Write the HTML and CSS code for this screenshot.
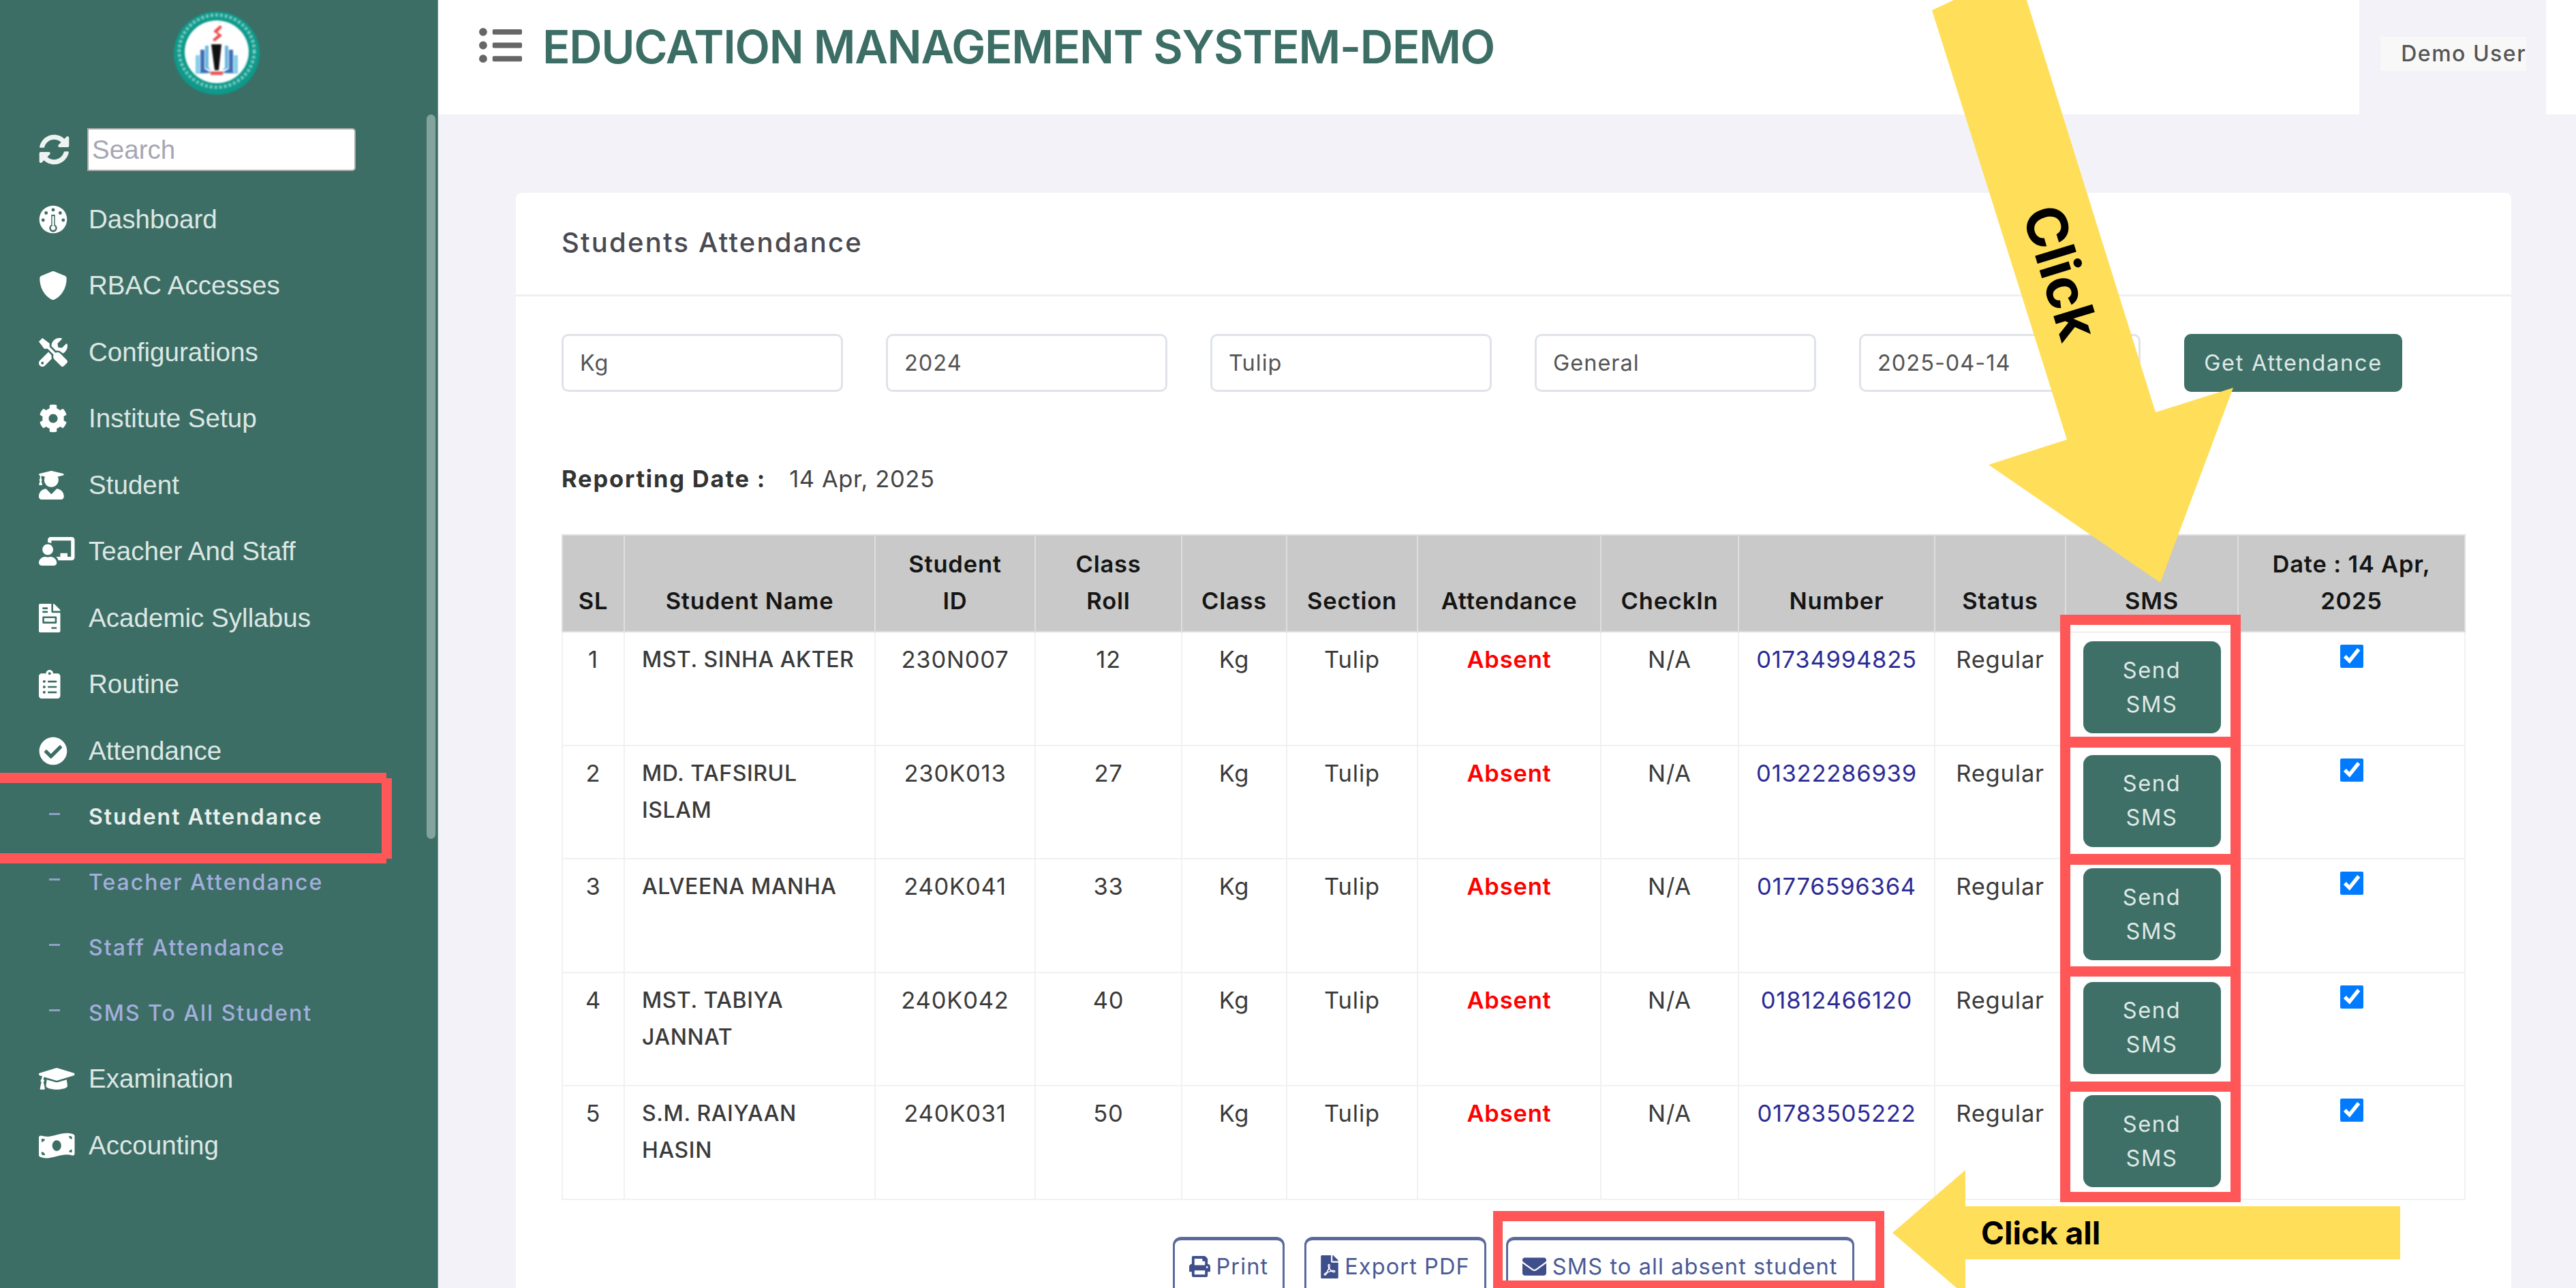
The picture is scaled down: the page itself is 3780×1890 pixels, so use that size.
FILE: index.html
```html
<!DOCTYPE html>
<html lang="en">
<head>
<meta charset="utf-8">
<title>Students Attendance</title>
<link rel="stylesheet" href="styles.css">
</head>
<body>
<div class="page">
  <aside class="sidebar">
    <div class="logo-wrap">
      <svg class="logo" viewBox="0 0 126 122">
        <ellipse cx="63" cy="61" rx="63" ry="61" fill="#0d9a8b"/>
        <ellipse cx="63" cy="58" rx="55" ry="53" fill="none" stroke="#d8efe9" stroke-width="5" stroke-dasharray="4 3" opacity=".55"/>
        <ellipse cx="63" cy="59" rx="47" ry="46" fill="#fff"/>
        <path d="M68 20l-10 9 7 5-8 7 3 3 11-9-7-5 7-7z" fill="#ef4b4b"/>
        <path d="M55 48h15l-4 38h-6z" fill="#111"/>
        <path d="M54 88h18v5H54z" fill="#ef5350"/>
        <path d="M32 64h6v24l14 3H32z" fill="#84cdea"/>
        <path d="M39 56h6v28l10 6H39z" fill="#3c6fb3"/>
        <path d="M46 50h5v32l4 4-9-3z" fill="#6bb6e0"/>
        <path d="M88 64h6v27H74l14-3z" fill="#84cdea"/>
        <path d="M81 56h6v34H71l10-6z" fill="#3c6fb3"/>
        <path d="M75 50h5v33l-9 3 4-4z" fill="#6bb6e0"/>
      </svg>
    </div>
    <div class="search-row">
      <svg class="icon-sync" viewBox="0 0 512 512"><path d="M370.72 133.28C339.458 104.008 298.888 87.962 255.848 88c-77.458.068-144.328 53.178-162.791 126.85-1.344 5.363-6.122 9.15-11.651 9.15H24.103c-7.498 0-13.194-6.807-11.807-14.176C33.933 94.924 134.813 8 256 8c66.448 0 126.791 26.136 171.315 68.685L463.03 40.97C478.149 25.851 504 36.559 504 57.941V192c0 13.255-10.745 24-24 24H345.941c-21.382 0-32.09-25.851-16.971-40.971l41.75-41.749zM32 296h134.059c21.382 0 32.09 25.851 16.971 40.971l-41.75 41.75c31.262 29.273 71.835 45.319 114.876 45.28 77.418-.07 144.315-53.144 162.787-126.849 1.344-5.363 6.122-9.15 11.651-9.15h57.304c7.498 0 13.194 6.807 11.807 14.176C478.067 417.076 377.187 504 256 504c-66.448 0-126.791-26.136-171.315-68.685L48.97 471.03C33.851 486.149 8 475.441 8 454.059V320c0-13.255 10.745-24 24-24z"/></svg>
      <input class="search" type="text" placeholder="Search">
    </div>
    <nav class="nav">
      <a class="nav-item"><span class="nav-icon"><svg viewBox="0 0 512 512"><circle cx="256" cy="256" r="248"/><g class="cut"><circle cx="256" cy="84" r="30"/><circle cx="130" cy="140" r="30"/><circle cx="382" cy="140" r="30"/><circle cx="76" cy="268" r="30"/><circle cx="436" cy="268" r="30"/><path d="M222 170h68v180a70 70 0 1 1-68 0z"/></g><path class="needle" d="M240 196h32v170h-32z"/><circle class="needle" cx="256" cy="408" r="40"/></svg></span>Dashboard</a>
      <a class="nav-item"><span class="nav-icon"><svg viewBox="0 0 512 512"><path d="M466.5 83.7l-192-80a48.15 48.15 0 0 0-36.9 0l-192 80C27.7 91.1 16 108.6 16 128c0 198.5 114.5 335.7 221.5 380.3 11.8 4.9 25.1 4.9 36.9 0C360.1 472.6 496 349.3 496 128c0-19.4-11.7-36.9-29.5-44.3z"/></svg></span>RBAC Accesses</a>
      <a class="nav-item"><span class="nav-icon"><svg viewBox="0 0 512 512"><path d="M501.1 395.7L384 278.6c-23.1-23.1-57.6-27.6-85.4-13.9L192 158.1V96L64 0 0 64l96 128h62.1l106.6 106.6c-13.6 27.8-9.2 62.3 13.9 85.4l117.1 117.1c14.6 14.6 38.2 14.6 52.7 0l52.7-52.7c14.5-14.6 14.5-38.2 0-52.7zM331.7 225c28.3 0 54.9 11 74.9 31l19.4 19.4c15.8-6.9 30.8-16.5 43.8-29.5 37.1-37.1 49.7-89.3 37.9-136.7-2.2-9-13.5-12.1-20.1-5.5l-74.4 74.4-67.9-11.3L334 98.9l74.4-74.4c6.6-6.6 3.4-17.9-5.7-20.2-47.4-11.7-99.6.9-136.6 37.9-28.5 28.5-41.9 66.1-41.2 103.6l82.1 82.1c8.1-1.9 16.5-2.9 24.7-2.9zm-103.9 82l-56.7-56.7L18.7 402.8c-25 25-25 65.5 0 90.5s65.5 25 90.5 0l123.6-123.6c-7.6-19.9-9.9-41.6-5-62.7zM64 472c-13.2 0-24-10.8-24-24 0-13.3 10.7-24 24-24s24 10.7 24 24c0 13.2-10.7 24-24 24z"/></svg></span>Configurations</a>
      <a class="nav-item"><span class="nav-icon"><svg viewBox="0 0 512 512"><path d="M487.4 315.7l-42.6-24.6c4.3-23.2 4.3-47 0-70.2l42.6-24.6c4.9-2.8 7.1-8.6 5.5-14-11.1-35.6-30-67.8-54.7-94.6-3.8-4.1-10-5.1-14.8-2.3L380.8 110c-17.9-15.4-38.5-27.3-60.8-35.1V25.8c0-5.6-3.9-10.5-9.4-11.7-36.7-8.2-74.3-7.8-109.2 0-5.5 1.2-9.4 6.1-9.4 11.7V75c-22.2 7.9-42.8 19.8-60.8 35.1L88.7 85.5c-4.9-2.8-11-1.9-14.8 2.3-24.7 26.7-43.6 58.9-54.7 94.6-1.7 5.4.6 11.2 5.5 14L67.3 221c-4.3 23.2-4.3 47 0 70.2l-42.6 24.6c-4.9 2.8-7.1 8.6-5.5 14 11.1 35.6 30 67.8 54.7 94.6 3.8 4.1 10 5.1 14.8 2.3l42.6-24.6c17.9 15.4 38.5 27.3 60.8 35.1v49.2c0 5.6 3.9 10.5 9.4 11.7 36.7 8.2 74.3 7.8 109.2 0 5.5-1.2 9.4-6.1 9.4-11.7v-49.2c22.2-7.9 42.8-19.8 60.8-35.1l42.6 24.6c4.9 2.8 11 1.9 14.8-2.3 24.7-26.7 43.6-58.9 54.7-94.6 1.5-5.5-.7-11.3-5.6-14.1zM256 336c-44.1 0-80-35.9-80-80s35.9-80 80-80 80 35.9 80 80-35.9 80-80 80z"/></svg></span>Institute Setup</a>
      <a class="nav-item"><span class="nav-icon"><svg viewBox="0 0 448 512"><path d="M319.4 320.6L224 416l-95.4-95.4C57.1 323.7 0 382.2 0 454.4v9.6c0 26.5 21.5 48 48 48h352c26.5 0 48-21.5 48-48v-9.6c0-72.2-57.1-130.7-128.6-133.8zM13.6 79.8l6.4 1.5v58.4c-7 4.2-12 11.5-12 20.3 0 8.4 4.6 15.4 11.1 19.7L3.5 242c-1.7 6.9 2.1 14 7.6 14h41.8c5.5 0 9.3-7.1 7.6-14l-15.6-62.3C51.4 175.4 56 168.4 56 160c0-8.8-5-16.1-12-20.3V87.1l66 15.9c-8.6 17.2-14 36.4-14 57 0 70.7 57.3 128 128 128s128-57.3 128-128c0-20.6-5.3-39.8-14-57l96.3-23.2c18.2-4.4 18.2-27.1 0-31.5l-190.4-46c-13-3.1-26.7-3.1-39.7 0L13.6 48.2c-18.1 4.4-18.1 27.2 0 31.6z"/></svg></span>Student</a>
      <a class="nav-item"><span class="nav-icon"><svg viewBox="0 0 640 512"><path d="M208 352c-2.39 0-4.78.35-7.06 1.09C187.98 357.3 174.35 360 160 360c-14.35 0-27.98-2.7-40.95-6.91-2.28-.74-4.66-1.09-7.05-1.09C49.94 352-.33 402.48 0 464.62.14 490.88 21.73 512 48 512h224c26.27 0 47.86-21.12 48-47.38.33-62.14-49.94-112.62-112-112.62zm-48-32c53.02 0 96-42.98 96-96s-42.98-96-96-96-96 42.98-96 96 42.98 96 96 96zM592 0H208c-26.47 0-48 22.25-48 49.59V96c23.42 0 45.1 6.78 64 17.8V64h352v288h-64v-64H384v64h-76.24c19.1 16.69 33.12 38.73 39.69 64H592c26.47 0 48-22.25 48-49.59V49.59C640 22.25 618.47 0 592 0z"/></svg></span>Teacher And Staff</a>
      <a class="nav-item"><span class="nav-icon"><svg viewBox="0 0 384 512"><path d="M288 256H96v64h192v-64zm89-151L279.1 7c-4.5-4.5-10.6-7-17-7H256v128h128v-6.1c0-6.3-2.5-12.4-7-16.9zm-153 31V0H24C10.7 0 0 10.7 0 24v464c0 13.3 10.7 24 24 24h336c13.3 0 24-10.7 24-24V160H248c-13.2 0-24-10.8-24-24zM64 72c0-4.42 3.58-8 8-8h80c4.42 0 8 3.58 8 8v16c0 4.42-3.58 8-8 8H72c-4.42 0-8-3.58-8-8V72zm0 64c0-4.42 3.58-8 8-8h80c4.42 0 8 3.58 8 8v16c0 4.42-3.58 8-8 8H72c-4.42 0-8-3.58-8-8v-16zm256 304c0 4.42-3.58 8-8 8h-80c-4.42 0-8-3.58-8-8v-16c0-4.42 3.58-8 8-8h80c4.42 0 8 3.58 8 8v16zm0-200v96c0 8.84-7.16 16-16 16H80c-8.84 0-16-7.16-16-16v-96c0-8.84 7.16-16 16-16h224c8.84 0 16 7.16 16 16z"/></svg></span>Academic Syllabus</a>
      <a class="nav-item"><span class="nav-icon"><svg viewBox="0 0 384 512"><path d="M336 64h-80c0-35.3-28.7-64-64-64s-64 28.7-64 64H48C21.5 64 0 85.5 0 112v352c0 26.5 21.5 48 48 48h288c26.5 0 48-21.5 48-48V112c0-26.5-21.5-48-48-48zM96 424c-13.3 0-24-10.7-24-24s10.7-24 24-24 24 10.7 24 24-10.7 24-24 24zm0-96c-13.3 0-24-10.7-24-24s10.7-24 24-24 24 10.7 24 24-10.7 24-24 24zm0-96c-13.3 0-24-10.7-24-24s10.7-24 24-24 24 10.7 24 24-10.7 24-24 24zm96-192c13.3 0 24 10.7 24 24s-10.7 24-24 24-24-10.7-24-24 10.7-24 24-24zm128 368c0 4.4-3.6 8-8 8H168c-4.4 0-8-3.6-8-8v-16c0-4.4 3.6-8 8-8h144c4.4 0 8 3.6 8 8v16zm0-96c0 4.4-3.6 8-8 8H168c-4.4 0-8-3.6-8-8v-16c0-4.4 3.6-8 8-8h144c4.4 0 8 3.6 8 8v16zm0-96c0 4.4-3.6 8-8 8H168c-4.4 0-8-3.6-8-8v-16c0-4.4 3.6-8 8-8h144c4.4 0 8 3.6 8 8v16z"/></svg></span>Routine</a>
      <a class="nav-item"><span class="nav-icon"><svg viewBox="0 0 512 512"><path d="M504 256c0 136.967-111.033 248-248 248S8 392.967 8 256 119.033 8 256 8s248 111.033 248 248zM227.314 387.314l184-184c6.248-6.248 6.248-16.379 0-22.627l-22.627-22.627c-6.248-6.249-16.379-6.249-22.628 0L216 308.118l-70.059-70.059c-6.248-6.248-16.379-6.248-22.628 0l-22.627 22.627c-6.248 6.248-6.248 16.379 0 22.627l104 104c6.249 6.249 16.379 6.249 22.628.001z"/></svg></span>Attendance</a>
      <div class="subnav">
        <a class="sub-item is-active"><span class="dash"></span>Student Attendance</a>
        <a class="sub-item"><span class="dash"></span>Teacher Attendance</a>
        <a class="sub-item"><span class="dash"></span>Staff Attendance</a>
        <a class="sub-item"><span class="dash"></span>SMS To All Student</a>
      </div>
      <a class="nav-item"><span class="nav-icon"><svg viewBox="0 0 640 512"><path d="M622.34 153.2L343.4 67.5c-15.2-4.67-31.6-4.67-46.79 0L17.66 153.2c-23.54 7.23-23.54 38.36 0 45.59l48.63 14.94c-10.67 13.19-17.23 29.28-17.88 46.9C38.78 266.15 32 276.11 32 288c0 10.78 5.68 19.85 13.86 25.65L20.33 428.53C18.11 438.52 25.71 448 35.94 448h56.11c10.24 0 17.84-9.48 15.62-19.47L82.14 313.65C90.32 307.85 96 298.78 96 288c0-11.57-6.47-21.25-15.66-26.87.76-15.02 8.44-28.3 20.69-36.72L296.6 284.5c9.06 2.78 26.44 6.25 46.79 0l278.95-85.7c23.55-7.24 23.55-38.36 0-45.6zM352.79 315.09c-28.53 8.76-52.84 3.92-65.59 0l-145.02-44.55L128 384c0 35.35 85.96 64 192 64s192-28.65 192-64l-14.18-113.47-145.03 44.56z"/></svg></span>Examination</a>
      <a class="nav-item"><span class="nav-icon"><svg viewBox="0 0 640 512"><path d="M621.16 54.46C582.37 38.19 543.55 32 504.75 32c-123.17-.01-246.33 62.34-369.5 62.34-30.89 0-61.76-3.92-92.65-13.72-3.47-1.1-6.95-1.62-10.35-1.62C15.04 79 0 92.32 0 110.81v317.26c0 12.63 7.23 24.6 18.84 29.46C57.63 473.81 96.45 480 135.25 480c123.17 0 246.34-62.35 369.51-62.35 30.89 0 61.76 3.92 92.65 13.72 3.47 1.1 6.95 1.62 10.35 1.62 17.21 0 32.25-13.32 32.25-31.81V83.93c-.01-12.64-7.24-24.6-18.85-29.47zM48 132.22c20.12 5.04 41.12 7.57 62.72 8.93C104.84 170.54 79 192.69 48 192.69v-60.47zm0 285v-47.78c34.37 0 62.18 27.27 63.71 61.4-22.53-1.81-43.59-6.31-63.71-13.62zM320 352c-44.19 0-80-42.99-80-96 0-53.02 35.82-96 80-96s80 42.98 80 96c0 53.03-35.83 96-80 96zm272 27.78c-17.52-4.39-35.71-6.85-54.32-8.44 5.87-26.08 27.5-45.88 54.32-49.28v57.72zm0-236.11c-30.89-3.91-54.86-29.7-55.81-61.55 19.54 2.17 38.09 6.23 55.81 12.66v48.89z"/></svg></span>Accounting</a>
    </nav>
    <div class="scrollbar"></div>
  </aside>

  <main class="main">
    <header class="topbar">
      <div class="topbar-left">
        <svg class="icon-list" viewBox="0 48 512 416"><path d="M48 48a48 48 0 1 0 48 48 48 48 0 0 0-48-48zm0 160a48 48 0 1 0 48 48 48 48 0 0 0-48-48zm0 160a48 48 0 1 0 48 48 48 48 0 0 0-48-48zm448 16H176a16 16 0 0 0-16 16v32a16 16 0 0 0 16 16h320a16 16 0 0 0 16-16v-32a16 16 0 0 0-16-16zm0-320H176a16 16 0 0 0-16 16v32a16 16 0 0 0 16 16h320a16 16 0 0 0 16-16V80a16 16 0 0 0-16-16zm0 160H176a16 16 0 0 0-16 16v32a16 16 0 0 0 16 16h320a16 16 0 0 0 16-16v-32a16 16 0 0 0-16-16z"/></svg>
        <h1 class="app-title">EDUCATION MANAGEMENT SYSTEM-DEMO</h1>
      </div>
      <div class="user-slot"><div class="user-chip">Demo User</div></div>
      <div class="topbar-end"></div>
    </header>

    <section class="content">
      <div class="card">
        <div class="card-head">Students Attendance</div>
        <div class="card-body">
          <div class="filters">
            <div class="field">Kg</div>
            <div class="field">2024</div>
            <div class="field">Tulip</div>
            <div class="field">General</div>
            <div class="field">2025-04-14</div>
            <button class="btn-primary btn-get" type="button">Get Attendance</button>
          </div>
          <p class="report"><strong>Reporting Date :</strong><span>14 Apr, 2025</span></p>
          <table class="grid">
            <colgroup>
              <col class="c-sl"><col class="c-name"><col class="c-id"><col class="c-roll"><col class="c-class"><col class="c-sec"><col class="c-att"><col class="c-chk"><col class="c-num"><col class="c-st"><col class="c-sms"><col class="c-date">
            </colgroup>
            <thead>
              <tr><th>SL</th><th>Student Name</th><th>Student<br>ID</th><th>Class<br>Roll</th><th>Class</th><th>Section</th><th>Attendance</th><th>CheckIn</th><th>Number</th><th>Status</th><th>SMS</th><th>Date : 14 Apr,<br>2025</th></tr>
            </thead>
            <tbody>
              <tr><td>1</td><td class="t-name">MST. SINHA AKTER</td><td>230N007</td><td>12</td><td>Kg</td><td>Tulip</td><td class="t-absent">Absent</td><td>N/A</td><td class="t-num">01734994825</td><td>Regular</td><td><button class="btn-primary btn-send" type="button">Send SMS</button></td><td><input class="tick" type="checkbox" checked></td></tr>
              <tr><td>2</td><td class="t-name">MD. TAFSIRUL ISLAM</td><td>230K013</td><td>27</td><td>Kg</td><td>Tulip</td><td class="t-absent">Absent</td><td>N/A</td><td class="t-num">01322286939</td><td>Regular</td><td><button class="btn-primary btn-send" type="button">Send SMS</button></td><td><input class="tick" type="checkbox" checked></td></tr>
              <tr><td>3</td><td class="t-name">ALVEENA MANHA</td><td>240K041</td><td>33</td><td>Kg</td><td>Tulip</td><td class="t-absent">Absent</td><td>N/A</td><td class="t-num">01776596364</td><td>Regular</td><td><button class="btn-primary btn-send" type="button">Send SMS</button></td><td><input class="tick" type="checkbox" checked></td></tr>
              <tr><td>4</td><td class="t-name">MST. TABIYA JANNAT</td><td>240K042</td><td>40</td><td>Kg</td><td>Tulip</td><td class="t-absent">Absent</td><td>N/A</td><td class="t-num">01812466120</td><td>Regular</td><td><button class="btn-primary btn-send" type="button">Send SMS</button></td><td><input class="tick" type="checkbox" checked></td></tr>
              <tr><td>5</td><td class="t-name">S.M. RAIYAAN HASIN</td><td>240K031</td><td>50</td><td>Kg</td><td>Tulip</td><td class="t-absent">Absent</td><td>N/A</td><td class="t-num">01783505222</td><td>Regular</td><td><button class="btn-primary btn-send" type="button">Send SMS</button></td><td><input class="tick" type="checkbox" checked></td></tr>
            </tbody>
          </table>
          <div class="actions">
            <button class="btn-outline" type="button"><svg class="ai-print" viewBox="0 0 512 512"><path d="M448 192V77.25c0-8.49-3.37-16.62-9.37-22.63L393.37 9.37c-6-6-14.14-9.37-22.63-9.37H96C78.33 0 64 14.33 64 32v160c-35.35 0-64 28.65-64 64v112c0 8.84 7.16 16 16 16h48v96c0 17.67 14.33 32 32 32h320c17.67 0 32-14.33 32-32v-96h48c8.84 0 16-7.16 16-16V256c0-35.35-28.65-64-64-64zm-64 256H128v-96h256v96zm0-224H128V64h192v48c0 8.84 7.16 16 16 16h48v96zm48 72c-13.25 0-24-10.75-24-24 0-13.26 10.75-24 24-24s24 10.74 24 24c0 13.25-10.75 24-24 24z"/></svg>Print</button>
            <button class="btn-outline" type="button"><svg class="ai-pdf" viewBox="0 0 384 512"><path d="M181.9 256.1c-5-16-4.9-46.9-2-46.9 8.4 0 7.6 36.9 2 46.9zm-1.7 47.2c-7.7 20.2-17.3 43.3-28.4 62.7 18.3-7 39-17.2 62.9-21.9-12.7-9.6-24.9-23.4-34.5-40.8zM86.1 428.1c0 .8 13.2-5.4 34.9-40.2-6.7 6.3-29.1 24.5-34.9 40.2zM248 160h136v328c0 13.3-10.7 24-24 24H24c-13.3 0-24-10.7-24-24V24C0 10.7 10.7 0 24 0h200v136c0 13.2 10.8 24 24 24zm-8 171.8c-20-12.2-33.3-29-42.7-53.8 4.5-18.5 11.6-46.6 6.2-64.2-4.7-29.4-42.4-26.5-47.8-6.8-5 18.3-.4 44.1 8.1 77-11.6 27.6-28.7 64.6-40.8 85.8-.1 0-.1.1-.2.1-27.1 13.9-73.6 44.5-54.5 68 5.6 6.9 16 10 21.5 10 17.9 0 35.7-18 61.1-61.8 25.8-8.5 54.1-19.1 79-23.2 21.7 11.8 47.1 19.5 64 19.5 29.2 0 31.2-32 19.7-43.4-13.9-13.6-54.3-9.7-73.6-7.2zM377 105L279 7c-4.5-4.5-10.6-7-17-7h-6v128h128v-6.1c0-6.3-2.5-12.4-7-16.9zm-74.1 255.3c4.1-2.7-2.5-11.9-42.8-9 37.1 15.8 42.8 9 42.8 9z"/></svg>Export PDF</button>
            <button class="btn-outline" type="button"><svg class="ai-mail" viewBox="0 0 512 512"><path d="M502.3 190.8c3.9-3.1 9.7-.2 9.7 4.7V400c0 26.5-21.5 48-48 48H48c-26.5 0-48-21.5-48-48V195.6c0-5 5.7-7.8 9.7-4.7 22.4 17.4 52.1 39.5 154.1 113.6 21.1 15.4 56.7 47.8 92.2 47.6 35.7.3 72-32.8 92.3-47.6 102-74.1 131.6-96.3 154-113.7zM256 320c23.2.4 56.6-29.2 73.4-41.4 132.7-96.3 142.8-104.7 173.4-128.7 5.8-4.5 9.2-11.5 9.2-18.9v-19c0-26.5-21.5-48-48-48H48C21.5 64 0 85.5 0 112v19c0 7.4 3.4 14.3 9.2 18.9 30.6 23.9 40.7 32.4 173.4 128.7 16.8 12.2 50.2 41.8 73.4 41.4z"/></svg>SMS to all absent student</button>
          </div>
        </div>
      </div>
    </section>
  </main>

  <div class="notes">
    <svg class="notes-art" viewBox="0 0 3780 1890">
      <polygon class="yellow" points="2835,15 2880,-6 2972,-6 3163,605 3277,569 3170,855 2918,682 3033,645"/>
      <polygon class="yellow" points="2777,1809 2884,1717 2884,1770 3522,1770 3522,1848 2884,1848 2884,1901"/>
    </svg>
    <span class="note-click">Click</span>
    <span class="note-all">Click all</span>
    <div class="mark-bar mark-top"></div>
    <div class="mark-bar mark-bottom"></div>
    <div class="mark-bar mark-right"></div>
    <div class="mark mark-1"></div>
    <div class="mark mark-2"></div>
    <div class="mark mark-3"></div>
    <div class="mark mark-4"></div>
    <div class="mark mark-5"></div>
    <div class="mark-all"></div>
  </div>
</div>
</body>
</html>
```

FILE: styles.css
```css
* { box-sizing: border-box; }
html, body { margin: 0; padding: 0; }
body { font-family: "Inter", "Liberation Sans", sans-serif; background: #f2f2f8; color: #3a3a3a; }

.page { position: relative; width: 3780px; height: 1890px; overflow: hidden; display: flex; }

/* Sidebar */
.sidebar { position: relative; flex: 0 0 643px; height: 100%; background: #3c6e65; padding-left: 57px; font-family: "Liberation Sans", Arial, sans-serif; border-right: 1px solid #6f9a92; }
.logo-wrap { height: 188px; padding: 17px 0 0 198px; }
.logo { display: block; width: 126px; height: 122px; filter: blur(.8px); }
.search-row { display: flex; align-items: center; height: 63px; gap: 26px; }
.icon-sync { width: 45px; height: 45px; fill: #eef3f2; }
.search { width: 394px; height: 63px; border: 2px solid #a9a9a9; border-radius: 0 5px 5px 0; background: #fff; padding: 0 5px; font: 38.6px "Liberation Sans", Arial, sans-serif; color: #333; outline: none; }
.search::placeholder { color: #a6a6b4; opacity: 1; }
.nav { margin-top: 22px; display: flex; flex-direction: column; }
.nav-item { display: flex; align-items: center; height: 97.5px; font-size: 38.6px; color: #dde7e4; }
.nav-icon { flex: 0 0 73px; display: flex; align-items: center; }
.nav-icon svg { height: 42px; width: auto; fill: #fff; display: block; }
.nav-icon .cut { fill: #3c6e65; }
.nav-icon .needle { fill: #fff; }
.subnav { display: flex; flex-direction: column; }
.sub-item { display: flex; align-items: center; height: 96px; font-family: "Inter", sans-serif; font-weight: 500; font-size: 32px; letter-spacing: 2px; color: #a3aedc; }
.sub-item.is-active { color: #e8efec; font-weight: 600; }
.dash { width: 16px; height: 3px; margin: 0 42px 8px 15px; background: #8fa0c9; }
.scrollbar { position: absolute; top: 168px; right: 3px; width: 13px; height: 1063px; border-radius: 7px; background: rgba(255,255,255,.37); }

/* Main */
.main { flex: 1; min-width: 0; display: flex; flex-direction: column; }
.topbar { display: flex; height: 168px; flex: none; }
.topbar-left { flex: 1; background: #fff; display: flex; align-items: flex-start; padding: 28px 0 0 60px; gap: 30px; }
.icon-list { width: 63px; height: 53px; margin-top: 12px; fill: #666; flex: none; }
.app-title { margin: 0; font-size: 67px; line-height: 82px; letter-spacing: -1.3px; font-weight: 600; color: #3c6e65; white-space: nowrap; }
.user-slot { flex: 0 0 272px; padding: 54px 29px 0 31px; }
.user-chip { height: 50px; line-height: 50px; background: #f8f8f9; padding-left: 30px; font-size: 32px; letter-spacing: 1.5px; font-weight: 500; color: #555; white-space: nowrap; overflow: hidden; }
.topbar-end { flex: 0 0 44px; background: #fff; }

.content { padding: 115px 95px 0 114px; }
.card { background: #fff; border-radius: 8px; min-height: 1700px; }
.card-head { height: 152px; border-bottom: 3px solid #eef0f3; padding: 0 0 4px 67px; display: flex; align-items: center; font-size: 40px; letter-spacing: 2.2px; font-weight: 500; color: #4a4a52; }
.card-body { padding: 55px 68px 0 67px; }

.filters { display: flex; gap: 63px; }
.field { width: 413px; height: 85px; border: 3px solid #dfe3e9; border-radius: 10px; padding-left: 24px; display: flex; align-items: center; font-size: 32.5px; letter-spacing: 1px; color: #555; background: #fff; }
.btn-primary { background: #3e7067; color: #dfe9e6; border: 0; border-radius: 10px; font-family: "Inter", sans-serif; font-size: 32.5px; letter-spacing: 1.7px; }
.btn-get { width: 320px; height: 85px; white-space: nowrap; padding: 0; margin-left: 1px; }

.report { display: flex; gap: 34px; align-items: center; margin: 100px 0 0; height: 54px; font-size: 34.5px; color: #444; letter-spacing: .6px; }
.report strong { font-weight: 700; color: #333; letter-spacing: 1.8px; }

.grid { margin-top: 55px; width: 2792px; table-layout: fixed; border-collapse: collapse; font-size: 34.5px; letter-spacing: .8px; line-height: 54px; }
.c-sl { width: 91px; } .c-name { width: 368px; } .c-id { width: 235px; } .c-roll { width: 215px; }
.c-class { width: 154px; } .c-sec { width: 192px; } .c-att { width: 269px; } .c-chk { width: 202px; }
.c-num { width: 288px; } .c-st { width: 192px; } .c-sms { width: 253px; } .c-date { width: 333px; }
.grid th { background: #c9c9c9; border: 2px solid #dedede; padding: 15px 4px 17px; font-weight: 600; color: #151515; text-align: center; vertical-align: bottom; }
.grid td { border: 2px solid #eff1f3; padding: 13px 4px 16.5px; text-align: center; vertical-align: top; }
.grid .t-name { text-align: left; padding: 13px 20px 16.5px 25px; font-weight: 500; font-size: 32px; letter-spacing: .6px; }
.t-absent { color: #f00; font-weight: 600; }
.t-num { color: #2b2b96; }
.btn-send { width: 202px; height: 135px; padding: 0 40px; line-height: 50px; border-radius: 14px; display: block; margin: 0 auto; }
.tick { width: 34px; height: 34px; margin: 5px 0 0; accent-color: #007bff; }

.actions { display: flex; justify-content: center; gap: 29px; margin-top: 54px; }
.btn-outline { height: 86px; display: flex; align-items: center; gap: 9px; padding: 0 21px; border: 3px solid #5a6a9c; border-top-width: 5px; border-radius: 12px; background: #fff; font-family: "Inter", sans-serif; font-size: 32.5px; letter-spacing: 1.1px; color: #4a5a94; white-space: nowrap; }
.btn-outline svg { fill: #3f4f8c; flex: none; }
.ai-print { width: 31px; height: 31px; }
.ai-pdf { width: 26px; height: 34px; }
.ai-mail { width: 35px; height: 35px; }

/* Tutorial annotations laid over the screenshot */
.notes { position: absolute; inset: 0; pointer-events: none; }
.notes-art { position: absolute; inset: 0; width: 3780px; height: 1890px; }
.yellow { fill: #ffde59; }
.note-click { position: absolute; left: 2904px; top: 350px; width: 240px; text-align: center; line-height: 100px; font-size: 82px; font-weight: 700; color: #000; transform: rotate(73deg); }
.note-all { position: absolute; left: 2907px; top: 1779px; line-height: 60px; font-size: 46px; font-weight: 700; color: #000; white-space: nowrap; }
.mark { position: absolute; left: 3023px; width: 265px; border: 15px solid #ff5757; }
.mark-1 { top: 902px; height: 195px; }
.mark-1::before { content: ""; display: block; height: 10px; background: #fff; }
.mark-2 { top: 1081px; height: 188px; }
.mark-3 { top: 1253px; height: 180px; }
.mark-4 { top: 1418px; height: 184px; }
.mark-5 { top: 1587px; height: 177px; }
.mark-all { position: absolute; left: 2191px; top: 1777px; width: 574px; height: 117px; border: 15px solid #ff5757; border-left-width: 14px; border-right-width: 13px; }
.mark-bar { position: absolute; background: #ff5757; }
.mark-top { left: 0; top: 1134px; width: 567px; height: 15px; }
.mark-bottom { left: 0; top: 1252px; width: 567px; height: 15px; }
.mark-right { left: 560px; top: 1142px; width: 15px; height: 118px; }
```
